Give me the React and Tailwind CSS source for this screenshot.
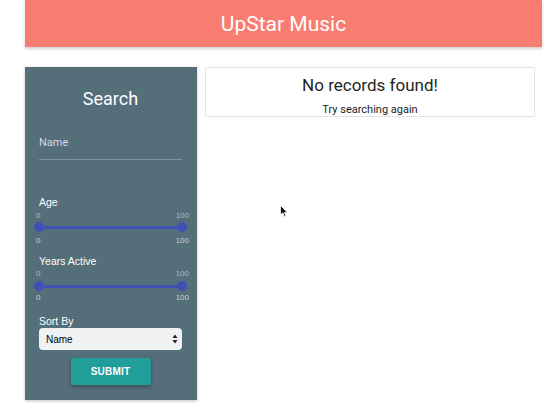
import React from "react";

function Slider() {
  return (
    <div className="relative h-[10px] w-full">
      <div className="absolute left-0 right-0 top-[4px] h-[3px] bg-[#3f51b5]" />
      <div className="absolute left-[-5px] top-0 h-[10px] w-[10px] rounded-full bg-[#3f51b5]" />
      <div className="absolute right-[-5px] top-0 h-[10px] w-[10px] rounded-full bg-[#3f51b5]" />
    </div>
  );
}

function Nums({ top }) {
  return (
    <div
      className={
        "flex justify-between -ml-[3px] -mr-[7px] h-[10px] text-[8px] leading-[10px] font-['Liberation_Sans',Arial,sans-serif] " +
        (top ? "text-[#aebdc4]" : "text-[#c9d3d8]")
      }
    >
      <span>0</span>
      <span>100</span>
    </div>
  );
}

export default function App() {
  return (
    <div className="relative w-[547px] h-[419px] bg-white font-['Roboto',sans-serif] overflow-hidden">
      <header className="ml-[25px] w-[517px] h-[47px] bg-[#f97c71] flex items-center justify-center shadow-[0_2px_3px_rgba(0,0,0,0.18)]">
        <span className="text-white text-[21px] leading-[24px]">UpStar Music</span>
      </header>

      <div className="flex mt-[20px] ml-[25px] gap-[8px] items-start">
        <aside className="w-[172px] bg-[#546e7a] pl-[14px] pr-[15px] pt-[20px] pb-[15px] shadow-[0_1px_3px_rgba(0,0,0,0.25)] flex flex-col">
          <div className="text-center text-white text-[18px] leading-[24px]">Search</div>

          <div className="mt-[25px] text-[11px] leading-[14px] text-[#d3dbdf]">Name</div>
          <div className="mt-[9px] h-px bg-[#7f939c]" />

          <div className="mt-[35px] text-[10.5px] leading-[14px] text-white font-['Liberation_Sans',Arial,sans-serif]">Age</div>
          <div className="mt-[2px]"><Nums top /></div>
          <div className="mt-[1px]"><Slider /></div>
          <div className="mt-[4px]"><Nums /></div>

          <div className="mt-[8px] text-[10.5px] leading-[14px] text-white font-['Liberation_Sans',Arial,sans-serif]">Years Active</div>
          <div className="mt-[1px]"><Nums top /></div>
          <div className="mt-[2px]"><Slider /></div>
          <div className="mt-[2px]"><Nums /></div>

          <div className="mt-[11px] text-[10.5px] leading-[14px] text-white font-['Liberation_Sans',Arial,sans-serif]">Sort By</div>
          <div className="h-[22px] rounded-[4px] bg-[#eff1f3] flex items-center justify-between pl-[7px] pr-[4px] font-['Liberation_Sans',Arial,sans-serif] text-[10px] text-black">
            <span>Name</span>
            <svg width="6" height="10" viewBox="0 0 6 10">
              <path d="M3 0.5 L5.5 4 L0.5 4 Z" fill="#222" />
              <path d="M3 9.5 L5.5 6 L0.5 6 Z" fill="#222" />
            </svg>
          </div>

          <div className="mt-[8px] flex justify-center">
            <button className="w-[80px] h-[27px] bg-[#219e9a] text-white text-[10px] font-bold font-['Liberation_Sans',Arial,sans-serif] tracking-[0.2px] rounded-[2px] shadow-[0_2px_4px_rgba(0,0,0,0.3)]">
              SUBMIT
            </button>
          </div>
        </aside>

        <section className="w-[330px] h-[50px] border border-[#e3e3e3] rounded-[2px] flex flex-col items-center pt-[7px]">
          <div className="text-[17px] leading-[20px] text-[#1f1f1f]">No records found!</div>
          <div className="mt-[8px] text-[11px] leading-[14px] text-[#222]">Try searching again</div>
        </section>
      </div>

      <svg className="absolute left-[280px] top-[205px]" width="9" height="13" viewBox="0 0 9 13">
        <path d="M0.5 0.5 L0.5 10 L2.8 7.8 L4.5 11.8 L6 11.2 L4.4 7.4 L7.5 7.4 Z" fill="#111" stroke="#fff" strokeWidth="0.8" />
      </svg>
    </div>
  );
}
